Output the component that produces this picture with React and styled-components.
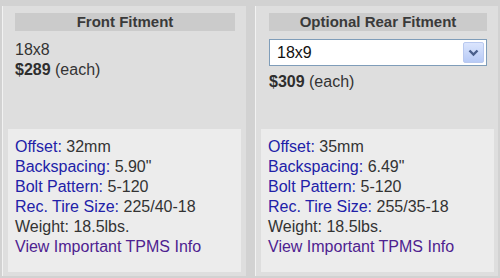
import React from "react";
import styled, { createGlobalStyle } from "styled-components";

const GlobalStyle = createGlobalStyle`
    html, body {
        margin: 0;
        padding: 0;
        background: #d2d2d2;
        font-family: Arial, "Liberation Sans", sans-serif;
    }
`;

const Wrapper = styled.div`
    display: flex;
    width: 500px;
    height: 278px;
    padding-top: 6px;
    box-sizing: border-box;
    background: #d2d2d2;
`;

const Panel = styled.div`
    width: ${props => props.width}px;
    margin-left: ${props => props.offset}px;
    height: 270px;
    box-sizing: border-box;
    background: #dedede;
    border-left: 1px solid #f2f2f2;
    padding: 7px 0 0;
    display: flex;
    flex-direction: column;
`;

const Top = styled.div`
    padding: 0 ${props => props.padRight}px 0 ${props => props.padLeft}px;
    height: 116px;
`;

const Heading = styled.div`
    height: 18px;
    line-height: 18px;
    background: #cbcbcb;
    color: #3a3a3a;
    font-size: 15px;
    font-weight: bold;
    text-align: center;
`;

const Line = styled.div`
    font-size: 16px;
    line-height: 20px;
    color: #333;
    margin-top: ${props => props.top || 0}px;
`;

const Price = styled.b`
    color: #2e2e2e;
`;

const Select = styled.div`
    margin-top: 8px;
    height: 27px;
    box-sizing: border-box;
    border: 1px solid #7f9db9;
    background: #fff;
    display: flex;
    align-items: center;
    justify-content: space-between;
    padding: 0 2px 0 7px;
    font-size: 16px;
    color: #111;
`;

const DropButton = styled.div`
    width: 21px;
    height: 21px;
    box-sizing: border-box;
    border: 1px solid #b9c9ef;
    border-radius: 2px;
    background: linear-gradient(#dbe5fd, #b7caf6);
    display: flex;
    align-items: center;
    justify-content: center;
`;

const Specs = styled.div`
    margin: 0 ${props => props.right}px 0 5px;
    padding: 8px 0 14px 7px;
    background: #ececec;
    height: 143px;
    box-sizing: border-box;
`;

const Label = styled.span`
    color: #2121a8;
`;

const Value = styled.span`
    color: #333;
`;

const InfoLink = styled.a`
    display: block;
    font-size: 16px;
    line-height: 20px;
    color: #4e2290;
    text-decoration: none;
`;

const Chevron = () => (
    <svg width="11" height="8" viewBox="0 0 11 8">
        <path d="M1.5 1.5 L5.5 5.5 L9.5 1.5" fill="none" stroke="#4a5f8c" strokeWidth="2.4" />
    </svg>
);

const SpecList = ({specs, right}) => (
    <Specs right={right}>
        <Line><Label>Offset:</Label> <Value>{specs.offset}</Value></Line>
        <Line><Label>Backspacing:</Label> <Value>{specs.backspacing}</Value></Line>
        <Line><Label>Bolt Pattern:</Label> <Value>{specs.bolt}</Value></Line>
        <Line><Label>Rec. Tire Size:</Label> <Value>{specs.tire}</Value></Line>
        <Line>Weight: {specs.weight}</Line>
        <InfoLink href="#">View Important TPMS Info</InfoLink>
    </Specs>
);

const front = {offset: "32mm", backspacing: "5.90\"", bolt: "5-120", tire: "225/40-18", weight: "18.5lbs."};
const rear = {offset: "35mm", backspacing: "6.49\"", bolt: "5-120", tire: "255/35-18", weight: "18.5lbs."};

const App = () => (
    <>
        <GlobalStyle/>
        <Wrapper>
            <Panel width={244} offset={2}>
                <Top padLeft={12} padRight={11}>
                    <Heading>Front Fitment</Heading>
                    <Line top={9}>18x8</Line>
                    <Line><Price>$289</Price> (each)</Line>
                </Top>
                <SpecList specs={front} right={5}/>
            </Panel>
            <Panel width={243} offset={9}>
                <Top padLeft={13} padRight={11}>
                    <Heading>Optional Rear Fitment</Heading>
                    <Select>
                        <span>18x9</span>
                        <DropButton><Chevron/></DropButton>
                    </Select>
                    <Line top={6}><Price>$309</Price> (each)</Line>
                </Top>
                <SpecList specs={rear} right={4}/>
            </Panel>
        </Wrapper>
    </>
);

export default App;
